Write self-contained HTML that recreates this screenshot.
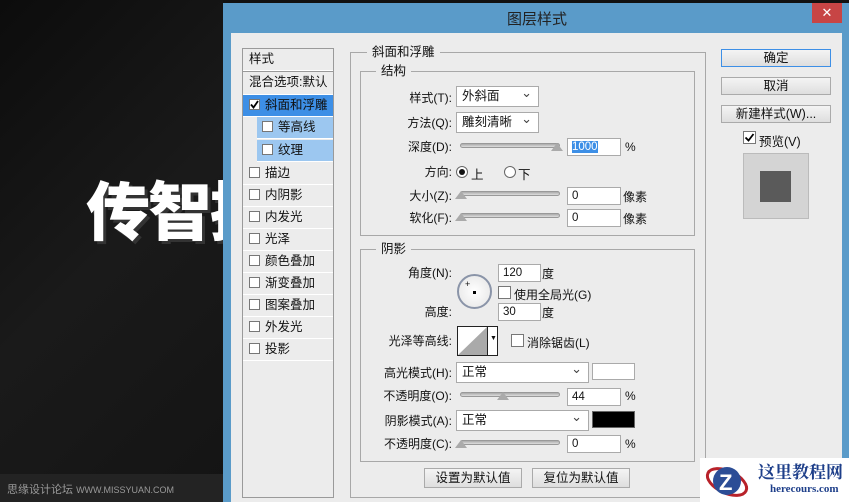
<!DOCTYPE html>
<html><head><meta charset="utf-8"><style>
*{margin:0;padding:0;box-sizing:border-box}
body{width:849px;height:502px;overflow:hidden;position:relative;background:#111;font-family:"Liberation Sans","Noto Sans CJK SC",sans-serif;font-size:12px;color:#111}
.a{position:absolute}
.bg{left:0;top:0;width:223px;height:502px;background:linear-gradient(135deg,#0c0c0c 0%,#1a1a1a 50%,#141414 100%)}
.frame{left:223px;top:3px;width:626px;height:499px;background:#5a9bc9}
.inner{left:231px;top:33px;width:611px;height:469px;background:#ececec}
.lst{left:242px;top:48px;width:92px;height:450px;border:1px solid #9a9a9a;background:#ececec}
.row{position:absolute;left:0;width:90px;height:22px;border-bottom:1px solid #fff;line-height:21px;padding-left:6px;font-size:12.5px}
.cb{display:inline-block;width:11px;height:11px;border:1px solid #777;background:#fff;vertical-align:-1px;margin-right:5px;position:relative}
.a.cb{position:absolute;margin:0}
.box{border:1px solid #a8a8a8}
.lg{background:#ececec;padding:0 5px;font-size:12.5px;line-height:14px}
.lab{font-size:12px;text-align:right;width:110px;line-height:14px}
.inp{background:#fff;border:1px solid #aaa;height:18px;line-height:16px;padding-left:4px;font-size:11.5px}
.sel{background:#fff;border:1px solid #aaa;height:21px;line-height:19px;padding-left:5px;font-size:12.5px}
.sel:after{content:"⌄";position:absolute;right:6px;top:-4px;font-size:13px;color:#444}
.tr{height:5px;border-radius:3px;background:linear-gradient(#aaa,#ddd);border:1px solid #999}
.th{width:0;height:0;border-left:6px solid transparent;border-right:6px solid transparent;border-bottom:8px solid #aaa}
.btn{background:linear-gradient(#f4f4f4,#dedede);border:1px solid #aaa;text-align:center;line-height:16px;font-size:12.5px}
.rad{width:12px;height:12px;border:1px solid #666;border-radius:50%;background:#fff}
</style></head><body>
<div class="a bg"></div>
<div class="a" style="left:86px;top:168px;font-size:64px;font-weight:900;color:#fff;letter-spacing:-2px;font-family:'Noto Sans CJK SC',sans-serif;text-shadow:3px 3px 0 #333;line-height:80px;white-space:nowrap">传智播</div>
<div class="a" style="left:0;top:474px;width:223px;height:28px;background:#232323"></div>
<div class="a" style="left:7px;top:481px;font-size:11px;color:#999">思缘设计论坛 <span style="font-size:9px">WWW.MISSYUAN.COM</span></div>
<div class="a frame"></div>
<div class="a" style="left:507px;top:8px;font-size:15px;color:#222">图层样式</div>
<div class="a" style="left:812px;top:3px;width:30px;height:20px;background:#c74545;color:#fff;text-align:center;line-height:20px;font-size:13px">✕</div>
<div class="a inner"></div>

<div class="a lst">
<div class="row" style="top:0">样式</div>
<div class="row" style="top:22px;border-top:1px solid #999;height:24px">混合选项:默认</div>
<div class="row" style="top:46px;background:#3d8fe6;color:#111"><span class="cb"><svg width="9" height="9" style="position:absolute;left:0;top:0"><path d="M1 4.5 L3.5 7.5 L8 1" fill="none" stroke="#000" stroke-width="1.8"/></svg></span>斜面和浮雕</div>
<div class="row" style="top:68px;left:14px;width:76px;background:#9cc7f0;padding-left:5px"><span class="cb"></span>等高线</div>
<div class="row" style="top:91px;left:14px;width:76px;background:#9cc7f0;padding-left:5px"><span class="cb"></span>纹理</div>
<div class="row" style="top:114px"><span class="cb"></span>描边</div>
<div class="row" style="top:136px"><span class="cb"></span>内阴影</div>
<div class="row" style="top:158px"><span class="cb"></span>内发光</div>
<div class="row" style="top:180px"><span class="cb"></span>光泽</div>
<div class="row" style="top:202px"><span class="cb"></span>颜色叠加</div>
<div class="row" style="top:224px"><span class="cb"></span>渐变叠加</div>
<div class="row" style="top:246px"><span class="cb"></span>图案叠加</div>
<div class="row" style="top:268px"><span class="cb"></span>外发光</div>
<div class="row" style="top:290px"><span class="cb"></span>投影</div>
</div>

<div class="a box" style="left:350px;top:52px;width:356px;height:446px"></div>
<div class="a lg" style="left:367px;top:45px">斜面和浮雕</div>
<div class="a box" style="left:360px;top:71px;width:335px;height:165px"></div>
<div class="a lg" style="left:376px;top:64px">结构</div>

<div class="a lab" style="left:342px;top:91px">样式(T):</div>
<div class="a sel" style="left:456px;top:86px;width:83px">外斜面</div>
<div class="a lab" style="left:342px;top:116px">方法(Q):</div>
<div class="a sel" style="left:456px;top:112px;width:83px">雕刻清晰</div>
<div class="a lab" style="left:342px;top:140px">深度(D):</div>
<div class="a tr" style="left:460px;top:143px;width:100px"></div>
<div class="a th" style="left:551px;top:143px"></div>
<div class="a inp" style="left:567px;top:138px;width:54px"><span style="background:#3d8fe6;color:#fff">1000</span></div>
<div class="a" style="left:625px;top:140px">%</div>
<div class="a lab" style="left:342px;top:165px">方向:</div>
<div class="a rad" style="left:456px;top:166px"></div><div class="a" style="left:459px;top:169px;width:6px;height:6px;border-radius:50%;background:#111"></div>
<div class="a" style="left:471px;top:164px;font-size:12.5px">上</div>
<div class="a rad" style="left:504px;top:166px"></div>
<div class="a" style="left:518px;top:164px;font-size:12.5px">下</div>
<div class="a lab" style="left:342px;top:189px">大小(Z):</div>
<div class="a tr" style="left:460px;top:191px;width:100px"></div>
<div class="a th" style="left:455px;top:191px"></div>
<div class="a inp" style="left:567px;top:187px;width:54px">0</div>
<div class="a" style="left:623px;top:188px">像素</div>
<div class="a lab" style="left:342px;top:211px">软化(F):</div>
<div class="a tr" style="left:460px;top:213px;width:100px"></div>
<div class="a th" style="left:455px;top:213px"></div>
<div class="a inp" style="left:567px;top:209px;width:54px">0</div>
<div class="a" style="left:623px;top:210px">像素</div>

<div class="a box" style="left:360px;top:249px;width:335px;height:213px"></div>
<div class="a lg" style="left:376px;top:242px">阴影</div>
<div class="a lab" style="left:342px;top:266px">角度(N):</div>
<div class="a" style="left:457px;top:274px;width:35px;height:35px;border-radius:50%;border:2px solid #8a94a8;background:radial-gradient(#fff,#e4e4e4)"></div>
<div class="a" style="left:473px;top:291px;width:3px;height:3px;background:#000"></div>
<div class="a" style="left:465px;top:279px;font-size:9px">+</div>
<div class="a inp" style="left:498px;top:264px;width:43px">120</div>
<div class="a" style="left:542px;top:265px">度</div>
<div class="a cb" style="left:498px;top:286px;width:13px;height:13px"></div>
<div class="a" style="left:514px;top:286px">使用全局光(G)</div>
<div class="a lab" style="left:342px;top:305px">高度:</div>
<div class="a inp" style="left:498px;top:303px;width:43px">30</div>
<div class="a" style="left:542px;top:304px">度</div>
<div class="a lab" style="left:342px;top:334px">光泽等高线:</div>
<div class="a" style="left:457px;top:326px;width:41px;height:30px;border:1px solid #222;background:#fff"><svg width="30" height="28" style="position:absolute;left:0;top:0"><polygon points="0,28 29,0 29,28" fill="#aaa"/></svg><div class="a" style="left:29px;top:0;width:1px;height:28px;background:#222"></div><div class="a" style="left:32px;top:8px;font-size:7px">▼</div></div>
<div class="a cb" style="left:511px;top:334px;width:13px;height:13px"></div>
<div class="a" style="left:527px;top:334px">消除锯齿(L)</div>
<div class="a lab" style="left:342px;top:366px">高光模式(H):</div>
<div class="a sel" style="left:456px;top:362px;width:133px">正常</div>
<div class="a" style="left:592px;top:363px;width:43px;height:17px;background:#fff;border:1px solid #aaa"></div>
<div class="a lab" style="left:342px;top:389px">不透明度(O):</div>
<div class="a tr" style="left:460px;top:392px;width:100px"></div>
<div class="a th" style="left:497px;top:392px"></div>
<div class="a inp" style="left:567px;top:388px;width:54px">44</div>
<div class="a" style="left:625px;top:389px">%</div>
<div class="a lab" style="left:342px;top:414px">阴影模式(A):</div>
<div class="a sel" style="left:456px;top:410px;width:133px">正常</div>
<div class="a" style="left:592px;top:411px;width:43px;height:17px;background:#000;border:1px solid #666"></div>
<div class="a lab" style="left:342px;top:437px">不透明度(C):</div>
<div class="a tr" style="left:460px;top:440px;width:100px"></div>
<div class="a th" style="left:455px;top:440px"></div>
<div class="a inp" style="left:567px;top:435px;width:54px">0</div>
<div class="a" style="left:625px;top:437px">%</div>
<div class="a btn" style="left:424px;top:468px;width:98px;height:20px;line-height:18px">设置为默认值</div>
<div class="a btn" style="left:532px;top:468px;width:98px;height:20px;line-height:18px">复位为默认值</div>

<div class="a btn" style="left:721px;top:49px;width:110px;height:18px;border-color:#3d8fe6">确定</div>
<div class="a btn" style="left:721px;top:77px;width:110px;height:18px">取消</div>
<div class="a btn" style="left:721px;top:105px;width:110px;height:18px">新建样式(W)...</div>
<div class="a cb" style="left:743px;top:131px;width:13px;height:13px"><svg width="11" height="11" style="position:absolute;left:0;top:0"><path d="M1.5 5.5 L4.5 8.5 L9.5 2" fill="none" stroke="#000" stroke-width="1.8"/></svg></div>
<div class="a" style="left:759px;top:131px;font-size:12.5px">预览(V)</div>
<div class="a" style="left:743px;top:153px;width:66px;height:66px;background:#d4d4d4;border:1px solid #bbb"></div>
<div class="a" style="left:760px;top:171px;width:31px;height:31px;background:#5a5a5a"></div>

<div class="a" style="left:700px;top:458px;width:149px;height:44px;background:#fff"></div>
<svg class="a" style="left:703px;top:460px" width="48" height="42"><ellipse cx="24" cy="22" rx="21" ry="11" fill="none" stroke="#b8222a" stroke-width="3" transform="rotate(25 24 22)"/><circle cx="24" cy="21" r="14" fill="#2c4d96"/><text x="16" y="30" font-size="22" font-weight="bold" fill="#fff" font-family="Liberation Sans">Z</text></svg>
<div class="a" style="left:758px;top:461px;font-size:17px;font-weight:bold;color:#1e3f8a;font-family:'Noto Serif CJK SC',serif;line-height:20px">这里教程网</div>
<div class="a" style="left:770px;top:483px;font-size:11px;font-weight:bold;color:#1e3f8a;font-family:'Liberation Serif',serif">herecours.com</div>
</body></html>
